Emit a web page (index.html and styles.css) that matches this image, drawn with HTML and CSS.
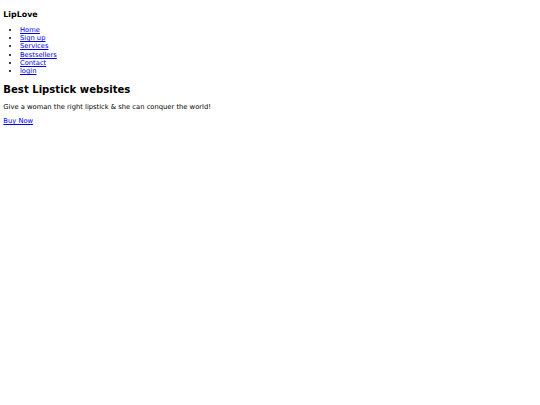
FILE: index.html
```html
<!DOCTYPE html>
<html lang="en">
<head>
<meta charset="utf-8">
<title>LipLove</title>
<link rel="stylesheet" href="styles.css">
</head>
<body class="page">
  <header class="site-header">
    <h3 class="site-title">LipLove</h3>
    <ul class="nav">
      <li class="nav-item"><a class="nav-link" href="#">Home</a></li>
      <li class="nav-item"><a class="nav-link" href="#">Sign up</a></li>
      <li class="nav-item"><a class="nav-link" href="#">Services</a></li>
      <li class="nav-item"><a class="nav-link" href="#">Bestsellers</a></li>
      <li class="nav-item"><a class="nav-link" href="#">Contact</a></li>
      <li class="nav-item"><a class="nav-link" href="#">login</a></li>
    </ul>
  </header>
  <main class="hero">
    <h2 class="hero-title">Best Lipstick websites</h2>
    <p class="tagline">Give a woman the right lipstick &amp; she can conquer the world!</p>
    <p class="cta"><a class="buy-link" href="#">Buy Now</a></p>
  </main>
</body>
</html>
```

FILE: styles.css
```css
html {
  background: #ffffff;
}

.page {
  margin: 3.33px;
  font-family: "DejaVu Sans", sans-serif;
  font-size: 6.75px;
  line-height: 7.9px;
  color: #000000;
}

.site-title {
  font-size: 7.9px;
  line-height: 9.1px;
  font-weight: bold;
  margin: 6.3px 0;
}

.nav {
  margin: 7px 0 8.3px;
  padding-left: 16.67px;
  list-style: disc;
}

.nav-item {
  line-height: 8.3px;
}

.nav-link,
.buy-link {
  color: #0000ee;
  text-decoration: underline;
}

.hero-title {
  font-size: 10.1px;
  line-height: 11.6px;
  font-weight: bold;
  margin: 8.3px 0;
}

.tagline,
.cta {
  margin: 6.67px 0;
}
```
